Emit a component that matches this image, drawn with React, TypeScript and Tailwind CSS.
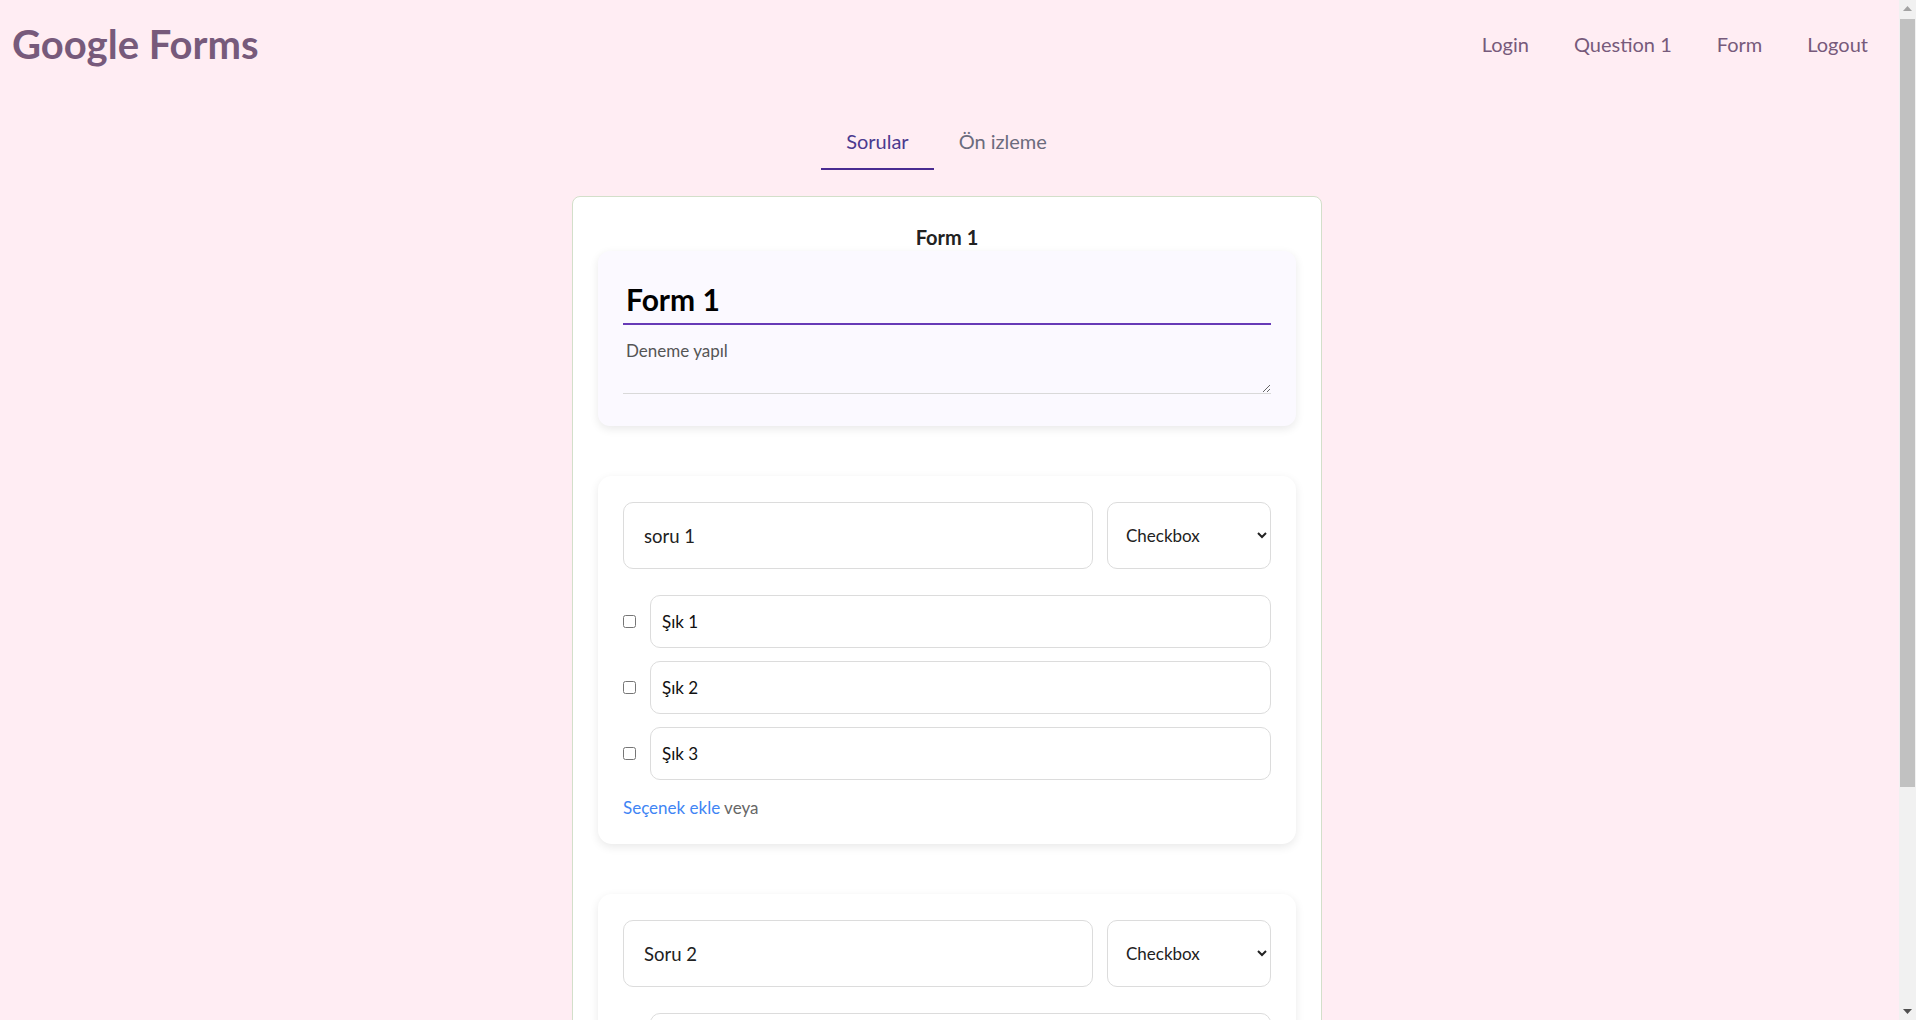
import React from "react";

const font = { fontFamily: "Lato, 'Noto Sans', sans-serif" };

function Question({ title, options }: { title: string; options: string[] }) {
  return (
    <div className="rounded-[14px] bg-white px-[25px] pt-[26px] pb-[24px] shadow-[0_3px_10px_rgba(0,0,0,0.09)]">
      <div className="flex gap-[14px]">
        <input
          defaultValue={title}
          className="h-[67px] min-w-0 flex-1 rounded-[10px] border border-[#dcdcdc] bg-white pl-[20px] text-[18.5px] text-[#222] outline-none"
        />
        <select
          defaultValue="checkbox"
          className="h-[67px] w-[164px] rounded-[10px] border border-[#dcdcdc] bg-white pl-[14px] pr-[6px] text-[17px] text-[#222] outline-none"
        >
          <option value="checkbox">Checkbox</option>
          <option value="radio">Radio</option>
          <option value="text">Text</option>
        </select>
      </div>
      <div className="mt-[26px] flex flex-col gap-[13px]">
        {options.map((o) => (
          <div key={o} className="flex items-center gap-[14px]">
            <input type="checkbox" className="m-0 h-[13px] w-[13px] shrink-0" />
            <input
              defaultValue={o}
              className="h-[53px] min-w-0 flex-1 rounded-[10px] border border-[#dcdcdc] bg-white pl-[11px] text-[17px] text-[#111] outline-none"
            />
          </div>
        ))}
      </div>
      <div className="mt-[16px] text-[17px] leading-[24px]">
        <span className="text-[#3f85f4]">Seçenek ekle</span>{" "}
        <span className="text-[#666]">veya</span>
      </div>
    </div>
  );
}

function FakeScrollbar() {
  return (
    <div className="fixed top-0 right-0 flex h-screen w-[17px] flex-col bg-[#f1f1f1]">
      <div className="flex h-[17px] items-center justify-center">
        <svg width="9" height="5" viewBox="0 0 9 5"><path d="M0 5 L4.5 0 L9 5 Z" fill="#a3a3a3" /></svg>
      </div>
      <div className="mx-[1px] mt-[2px] h-[768px] bg-[#c1c1c1]" />
      <div className="flex-1" />
      <div className="flex h-[17px] items-center justify-center">
        <svg width="9" height="5" viewBox="0 0 9 5"><path d="M0 0 L9 0 L4.5 5 Z" fill="#505050" /></svg>
      </div>
    </div>
  );
}

export default function App() {
  return (
    <div className="min-h-screen bg-[#ffedf3] pr-[17px] pb-[24px]" style={font}>
      <header className="flex h-[88px] items-center justify-between pl-[12px] pr-[31px]">
        <div className="text-[40px] font-bold leading-none text-[#775a7b]">Google Forms</div>
        <nav className="flex items-center gap-[45px] text-[20px] text-[#775a7b]">
          <span>Login</span>
          <span>Question 1</span>
          <span>Form</span>
          <span>Logout</span>
        </nav>
      </header>

      <div className="flex justify-center pr-[6px]">
        <div className="flex text-[20px] leading-[28px]">
          <div className="border-b-2 border-[#4a2c91] px-[25px] pt-[39px] pb-[13px] text-[#4b3a8f]">Sorular</div>
          <div className="border-b-2 border-transparent px-[25px] pt-[39px] pb-[13px] text-[#6b6b7d]">Ön izleme</div>
        </div>
      </div>

      <div className="mt-[26px] flex justify-center pr-[5px]">
        <div className="w-[750px] rounded-[8px] border border-[#d3dfca] bg-white px-[25px] pt-[26px] pb-[24px]">
          <div className="text-center text-[20px] font-bold leading-[28px] text-[#222]">Form 1</div>
          <div className="flex flex-col gap-[50px]">
            <div className="rounded-[12px] bg-[#fbf9ff] px-[25px] pt-[24px] pb-[32px] shadow-[0_3px_10px_rgba(0,0,0,0.09)]">
              <input
                defaultValue="Form 1"
                className="block h-[50px] w-full border-b-2 border-[#673ab7] bg-transparent px-[3px] text-[30px] font-bold text-black outline-none"
              />
              <textarea
                defaultValue="Deneme yapıl"
                className="mt-[8px] block h-[61px] w-full border-b border-[#d9d9d9] bg-transparent px-[3px] pt-[6px] text-[17px] leading-[24px] text-[#555] outline-none"
              />
            </div>
            <Question title="soru 1" options={["Şık 1", "Şık 2", "Şık 3"]} />
            <Question title="Soru 2" options={["Şık 1", "Şık 2", "Şık 3"]} />
          </div>
        </div>
      </div>
      <FakeScrollbar />
    </div>
  );
}
